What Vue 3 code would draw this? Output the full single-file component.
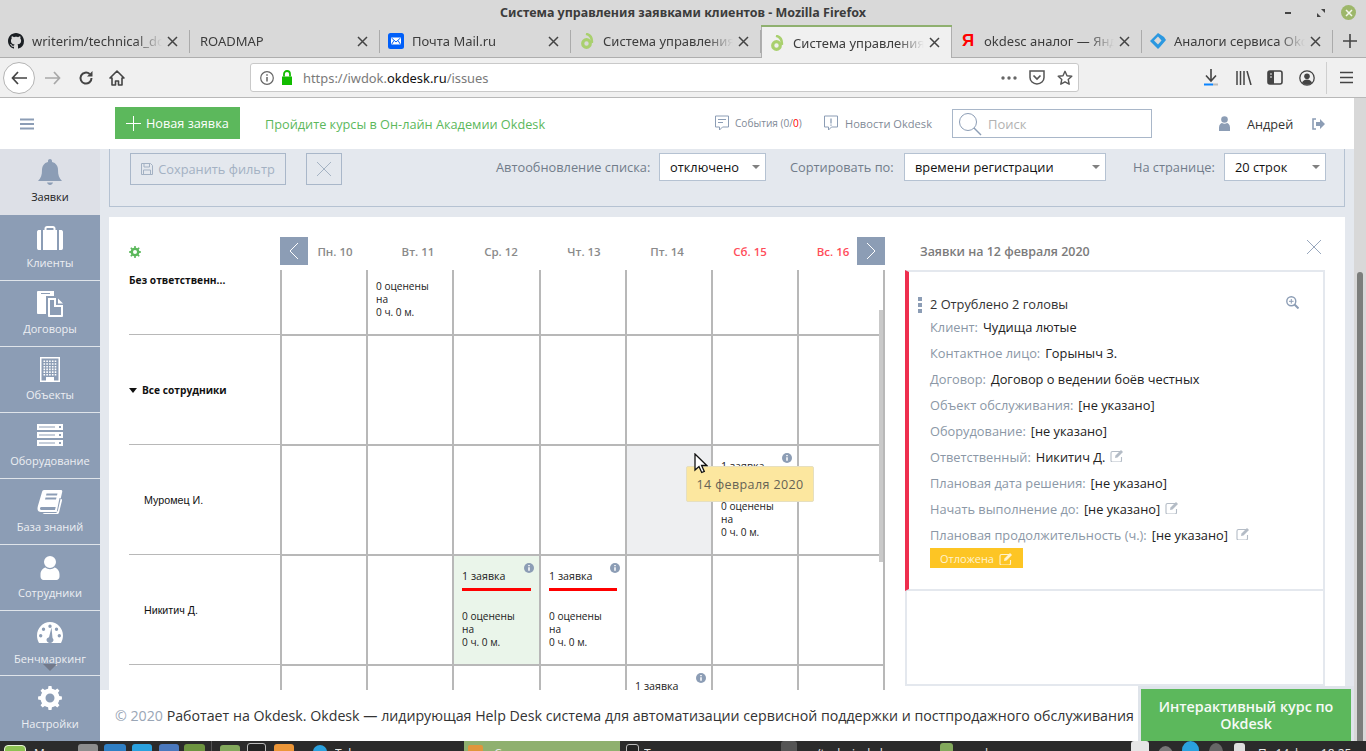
<script setup>
const gearPath = (cx, cy, ro, ri, hole, teeth) => {
  let d = ''
  const step = (Math.PI * 2) / teeth
  for (let i = 0; i < teeth; i++) {
    const a = i * step
    const pts = [
      [ri, a - step * 0.5],
      [ri, a - step * 0.26],
      [ro, a - step * 0.16],
      [ro, a + step * 0.16],
      [ri, a + step * 0.26]
    ]
    pts.forEach(([r, t], j) => {
      const x = (cx + r * Math.cos(t)).toFixed(2)
      const y = (cy + r * Math.sin(t)).toFixed(2)
      d += `${i === 0 && j === 0 ? 'M' : 'L'}${x} ${y}`
    })
  }
  d += 'Z'
  d += `M${cx - hole} ${cy}a${hole} ${hole} 0 1 0 ${hole * 2} 0a${hole} ${hole} 0 1 0 ${-hole * 2} 0Z`
  return d
}

const buildingPath = () => {
  let d = 'M3 0h20v25H3zM4.500 1.500v22h4.500v-3.500h8v3.500h4.500v-22z'
  for (let r = 0; r < 6; r++) {
    for (let c = 0; c < 5; c++) {
      d += `M${6.5 + c * 2.8} ${3.5 + r * 2.7}h1.600v1.600h-1.600z`
    }
  }
  return d
}

const serverPath = () => {
  let d = ''
  ;[1, 9, 17].forEach((y) => {
    d += `M0 ${y}h26v6H0zM22 ${y + 2}h2v2h-2zM2 ${y + 2.5}v1h16v-1z`
  })
  return d
}

const navItems = [
  { label: 'Заявки', active: true, d: 'M13 0c1.100 0 2 .8 2 2v1c4 1 6 4 6 8 0 5 1 8 4 11H1c3-3 4-6 4-11 0-4 2-7 6-8V2c0-1.200.9-2 2-2zM10 23.500h6c-.5 1.500-1.500 2.500-3 2.500s-2.500-1-3-2.500z' },
  { label: 'Клиенты', d: 'M1.500 5H4v20H1.500C.7 25 0 24 0 23V7c0-1 .7-2 1.500-2zM6 5h1.500V3.500C7.500 2.100 8.600 1 10 1h6c1.400 0 2.500 1.100 2.500 2.500V5H20v20H6zM9.500 5h7V3.500c0-.3-.2-.5-.5-.5h-6c-.3 0-.5.2-.5.500zM22 5h2.500c.8 0 1.500 1 1.500 2v16c0 1-.7 2-1.500 2H22z' },
  { label: 'Договоры', d: 'M1 0h16v5h-8v18H1c-.5 0-1-.5-1-1V1c0-.5.500-1 1-1zM4 2v1h9V2zM11 7h8v7h7v11c0 .5-.5 1-1 1H12c-.5 0-1-.5-1-1zM13 9v15h11v-8h-7V9zM21 7.500l5 5h-5z' },
  { label: 'Объекты', d: buildingPath() },
  { label: 'Оборудование', d: serverPath() },
  { label: 'База знаний', d: 'M7 1h17c1 0 1.500 1 1.200 2L21 21c-.3 1.500-1 2-2.500 2H4c-2 0-3.500-1-3.500-3 0-1 .1-2 .4-3L5 3c.3-1.300 1-2 2-2zM9.500 4.500l-.5 2h11l.5-2zM8.500 8.500l-.5 2h11l.5-2zM4.500 18c-1 0-1.500.7-1.500 1.500S3.500 21 4.500 21H18c.2-1 .5-2 .7-3zM22.500 9l-3 15H5.600c.6.700 1.400 1 2.400 1h12c1 0 1.700-.5 2-1.500l3-12c.2-1-.5-2-2.500-2.500z' },
  { label: 'Сотрудники', d: 'M13 1a6 6 0 1 1 0 12 6 6 0 0 1 0-12zM8.500 12.500c1.200 1 2.800 1.700 4.500 1.700s3.300-.7 4.500-1.700c2.500.5 5 3 5 7v2c0 2-1.500 3.500-3 3.500H6.500c-1.500 0-3-1.500-3-3.500v-2c0-4 2.500-6.500 5-7z' },
  { label: 'Бенчмаркинг', d: 'M13 1C6 1 0 7 0 14.500c0 2.700.8 5.200 2 7.500h22c1.200-2.300 2-4.800 2-7.500C26 7 20 1 13 1zM13 3.500a1.700 1.700 0 1 1 0 3.400 1.700 1.700 0 0 1 0-3.400zM6.500 6.500a1.700 1.700 0 1 1 0 3.400 1.700 1.700 0 0 1 0-3.400zM19.500 6.500a1.700 1.700 0 1 1 0 3.400 1.700 1.700 0 0 1 0-3.400zM3.700 13a1.700 1.700 0 1 1 0 3.400 1.700 1.700 0 0 1 0-3.400zM22.300 13a1.700 1.700 0 1 1 0 3.400 1.700 1.700 0 0 1 0-3.400zM14.500 6.500l1 10.500c.6.500 1 1.200 1 2 0 1.500-1.500 3-3.500 3s-3.500-1.500-3.500-3c0-1.300 1-2.500 2.500-2.800z' },
  { label: 'Настройки', d: gearPath(13, 12, 12, 9.500, 4.500, 8) }
]

const tabs = [
  { title: 'writerim/technical_docs', icon: 'github', width: 190 },
  { title: 'ROADMAP', icon: '', width: 190 },
  { title: 'Почта Mail.ru', icon: 'mail', width: 191 },
  { title: 'Система управления заявками', icon: 'okdesk', width: 190 },
  { title: 'Система управления заявками', icon: 'okdesk', width: 191, active: true },
  { title: 'okdesc аналог — Яндекс', icon: 'yandex', width: 190 },
  { title: 'Аналоги сервиса Okdesk', icon: 'analog', width: 191 }
]

const days = [
  { label: 'Пн. 10' }, { label: 'Вт. 11' }, { label: 'Ср. 12' }, { label: 'Чт. 13' },
  { label: 'Пт. 14' }, { label: 'Сб. 15', off: true }, { label: 'Вс. 16', off: true }
]

const rows = [
  { name: 'Без ответственн...', kind: 'bold', cells: { 1: {} } },
  { name: 'Все сотрудники', kind: 'group', cells: {} },
  { name: 'Муромец И.', kind: 'person', cells: { 5: {} }, hover: 4 },
  { name: 'Никитич Д.', kind: 'person', cells: { 2: {}, 3: {} }, today: 2 },
  { name: '', kind: 'person', cells: { 4: {} } }
]

const fields = [
  { label: 'Клиент:', value: 'Чудища лютые' },
  { label: 'Контактное лицо:', value: 'Горыныч З.' },
  { label: 'Договор:', value: 'Договор о ведении боёв честных' },
  { label: 'Объект обслуживания:', value: '[не указано]' },
  { label: 'Оборудование:', value: '[не указано]' },
  { label: 'Ответственный:', value: 'Никитич Д.', edit: true },
  { label: 'Плановая дата решения:', value: '[не указано]' },
  { label: 'Начать выполнение до:', value: '[не указано]', edit: true },
  { label: 'Плановая продолжительность (ч.):', value: '[не указано]', edit: true, wide: true }
]

const editPath = 'M11 2.500H2.500C1.700 2.500 1 3.200 1 4v7.500C1 12.300 1.700 13 2.500 13H10c.8 0 1.500-.7 1.500-1.500V8'
const miniGear = gearPath(6, 6, 6, 4.400, 2, 8)

const taskIcons = [
  { w: 20, ml: 0, c: '#8d8d8d' }, { w: 22, ml: 6, c: '#2f7fc4' }, { w: 20, ml: 6, c: '#2aa1de' },
  { w: 20, ml: 7, c: '#4a78bd' }, { w: 21, ml: 5, c: '#6d9440' }
]
</script>

<template>
  <div class="page">
    <div class="titlebar">
      <span class="title-text">Система управления заявками клиентов - Mozilla Firefox</span>
      <div class="win-btns">
        <span class="win-min"></span>
        <svg class="win-max" width="8" height="8" viewBox="0 0 8 8"><path d="M4 0h4v4zM4 8H0V4z" fill="#444" /></svg>
        <span class="win-close">
          <svg width="8" height="8" viewBox="0 0 8 8"><path d="M1 1l6 6M7 1L1 7" stroke="#f4f7ec" stroke-width="1.500" /></svg>
        </span>
      </div>
    </div>

    <div class="tabstrip">
      <div v-for="t in tabs" :key="t.title + t.width + t.icon" class="tab" :class="{ active: t.active }" :style="{ width: t.width + 'px' }">
        <svg v-if="t.icon === 'github'" class="fav" viewBox="0 0 16 16"><path fill="#1b1f23" d="M8 0C3.580 0 0 3.580 0 8c0 3.540 2.290 6.530 5.470 7.590.4.070.55-.17.55-.38 0-.19-.01-.82-.01-1.490-2.010.37-2.530-.49-2.690-.94-.09-.23-.48-.94-.82-1.130-.28-.15-.68-.52-.01-.53.63-.01 1.080.58 1.230.82.72 1.210 1.870.87 2.330.66.070-.52.28-.87.51-1.070-1.780-.2-3.640-.89-3.640-3.950 0-.87.31-1.590.82-2.150-.08-.2-.36-1.020.08-2.120 0 0 .67-.21 2.200.82.64-.18 1.320-.27 2-.27s1.360.09 2 .27c1.530-1.040 2.200-.82 2.200-.82.44 1.100.16 1.920.08 2.120.51.56.82 1.270.82 2.150 0 3.070-1.870 3.750-3.650 3.950.29.25.54.73.54 1.480 0 1.070-.01 1.930-.01 2.200 0 .21.15.46.55.38A8.010 8.010 0 0 0 16 8c0-4.420-3.580-8-8-8z" /></svg>
        <svg v-else-if="t.icon === 'mail'" class="fav" viewBox="0 0 16 16"><rect width="16" height="16" rx="2.500" fill="#005ff9" /><path d="M3 4.500h10v7H3z" fill="#fff" /><path d="M3.500 5L8 9l4.500-4M3.500 11.500L6 7.500M12.500 11.500L10 7.500" stroke="#005ff9" stroke-width="1" fill="none" /></svg>
        <svg v-else-if="t.icon === 'okdesk'" class="fav" viewBox="0 0 16 16"><circle cx="7.500" cy="10.500" r="3.800" fill="none" stroke="#a9d06e" stroke-width="3.200" /><path d="M7 .8c4 1 6.300 4 5.800 9" fill="none" stroke="#a9d06e" stroke-width="2.600" /></svg>
        <span v-else-if="t.icon === 'yandex'" class="fav ya">Я</span>
        <svg v-else-if="t.icon === 'analog'" class="fav" viewBox="0 0 16 16"><path d="M8 0l6 4 2 3-6 7-2 2-2-2-6-6 3-3zM8 3.500L4 7.500l3 3 1 1 3.500-4z" fill="#2b98e0" fill-rule="evenodd" /></svg>
        <span class="tab-text" :class="{ plain: !t.icon }">{{ t.title }}</span>
        <svg class="tab-x" width="11" height="11" viewBox="0 0 11 11"><path d="M1 1l9 9M10 1l-9 9" stroke="#444" stroke-width="1.500" /></svg>
      </div>
      <div class="newtab">
        <svg width="14" height="14" viewBox="0 0 14 14"><path d="M7 0v14M0 7h14" stroke="#444" stroke-width="1.600" /></svg>
      </div>
    </div>

    <div class="toolbar">
      <div class="back-btn">
        <svg width="16" height="14" viewBox="0 0 16 14"><path d="M7 1L1.500 7 7 13M2 7h14" stroke="#444" stroke-width="1.700" fill="none" /></svg>
      </div>
      <svg class="fwd" width="16" height="14" viewBox="0 0 16 14"><path d="M9 1l5.500 6L9 13M14 7H0" stroke="#a8a8a8" stroke-width="1.700" fill="none" /></svg>
      <svg class="reload" width="16" height="16" viewBox="0 0 16 16"><path d="M13.500 8a5.500 5.500 0 1 1-1.800-4" stroke="#444" stroke-width="2" fill="none" /><path d="M14.500 1v5.500H9z" fill="#444" /></svg>
      <svg class="home" width="16" height="16" viewBox="0 0 16 16"><path d="M8 1L1 8h2v7h3.500v-4h3v4H13V8h2z" stroke="#444" stroke-width="1.600" fill="none" stroke-linejoin="round" /></svg>
      <div class="urlbar">
        <svg class="url-i" width="14" height="14" viewBox="0 0 14 14"><circle cx="7" cy="7" r="6.300" fill="none" stroke="#666" stroke-width="1.200" /><path d="M7 6v4.500M7 3.200v1.600" stroke="#666" stroke-width="1.500" /></svg>
        <svg class="url-lock" width="12" height="15" viewBox="0 0 12 15"><path d="M1 6.500h10V15H1z" fill="#12bc00" /><path d="M3 6.500V4a3 3 0 0 1 6 0v2.500" fill="none" stroke="#12bc00" stroke-width="1.800" /></svg>
        <span class="url-text">https://iwdok.<b>okdesk.ru</b>/issues</span>
        <svg class="url-dots" width="16" height="4" viewBox="0 0 16 4"><circle cx="2" cy="2" r="1.700" fill="#666" /><circle cx="8" cy="2" r="1.700" fill="#666" /><circle cx="14" cy="2" r="1.700" fill="#666" /></svg>
        <svg class="url-pocket" width="16" height="15" viewBox="0 0 16 15"><path d="M1 1h14v6.500C15 11 12 14 8 14S1 11 1 7.500z" fill="none" stroke="#555" stroke-width="1.500" /><path d="M4.500 5.500L8 9l3.500-3.500" fill="none" stroke="#555" stroke-width="1.700" /></svg>
        <svg class="url-star" width="16" height="16" viewBox="0 0 16 16"><path d="M8 1.300l2 4.400 4.800.5-3.600 3.200 1 4.800L8 11.800l-4.200 2.400 1-4.800L1.200 6.200 6 5.700z" fill="none" stroke="#555" stroke-width="1.400" stroke-linejoin="round" /></svg>
      </div>
      <div class="tool-right">
        <svg class="tool-dl" width="14" height="18" viewBox="0 0 14 18"><path d="M7 0v11M2 6.500L7 12l5-5.500" stroke="#444" stroke-width="1.600" fill="none" /><path d="M0 15.500h9" stroke="#0a84ff" stroke-width="2" /><path d="M9 15.500h5" stroke="#bbb" stroke-width="2" /></svg>
        <svg class="tool-lib" width="16" height="14" viewBox="0 0 16 14"><path d="M1 0v14M4.500 0v14M8 0v14M11 0l4 14" stroke="#444" stroke-width="1.500" /></svg>
        <svg class="tool-side" width="16" height="15" viewBox="0 0 16 15"><rect x="1" y="1" width="14" height="13" rx="2" fill="none" stroke="#444" stroke-width="1.600" /><path d="M1 1h6v13H1z" fill="#444" /><path d="M3 4h2M3 7h2" stroke="#eee" stroke-width="1" /></svg>
        <svg class="tool-acc" width="16" height="16" viewBox="0 0 16 16"><circle cx="8" cy="8" r="7.200" fill="none" stroke="#444" stroke-width="1.300" /><circle cx="8" cy="6.200" r="2.800" fill="#444" /><path d="M3 12.500c1-2 3-3 5-3s4 1 5 3c-1 1.500-3 2.300-5 2.300s-4-.8-5-2.300z" fill="#444" /></svg>
        <span class="tool-sep"></span>
        <svg class="tool-menu" width="13" height="13" viewBox="0 0 13 13"><path d="M0 1.500h13M0 6.500h13M0 11.500h13" stroke="#444" stroke-width="1.700" /></svg>
      </div>
    </div>

    <div class="app">
      <div class="app-col">
        <header class="head">
          <svg class="burger" width="14" height="12" viewBox="0 0 14 12"><path d="M0 1.500h14M0 6h14M0 10.500h14" stroke="#8c9db5" stroke-width="2.200" /></svg>
          <button class="new-btn">
            <svg width="15" height="15" viewBox="0 0 15 15"><path d="M7.500 0v15M0 7.500h15" stroke="#fff" stroke-width="1" /></svg>
            <span>Новая заявка</span>
          </button>
          <a class="academy">Пройдите курсы в Он-лайн Академии Okdesk</a>
          <div class="hd-item ev">
            <svg width="14" height="16" viewBox="0 0 14 16"><path d="M.5 1h13v11H7.500l-3 3v-3h-4zM3 4.500h8M3 7.500h5" fill="none" stroke="#8c9db5" /></svg>
            <span>События (0/<em>0</em>)</span>
          </div>
          <div class="hd-item news">
            <svg width="14" height="16" viewBox="0 0 14 16"><path d="M.5 1h13v11H7.500l-3 3v-3h-4z" fill="none" stroke="#8c9db5" /><path d="M7 3.500v5M7 9.500v1.200" stroke="#8c9db5" stroke-width="1.300" /></svg>
            <span>Новости Okdesk</span>
          </div>
          <div class="search">
            <svg width="24" height="24" viewBox="0 0 24 24"><circle cx="10" cy="10" r="8.500" fill="none" stroke="#8c9db5" /><path d="M16 16l7 7" stroke="#8c9db5" stroke-width="1.400" /></svg>
            <span>Поиск</span>
          </div>
          <svg class="user-ico" width="11" height="15" viewBox="0 0 11 15"><circle cx="5.500" cy="3.500" r="3.300" fill="#8c9db5" /><path d="M0 15v-3.500C0 8.500 2 7 3 7c.7.500 1.600.8 2.500.8S7.300 7.500 8 7c1 0 3 1.500 3 4.500V15z" fill="#8c9db5" /></svg>
          <span class="user-name">Андрей</span>
          <svg class="exit-ico" width="13" height="12" viewBox="0 0 13 12"><path d="M4 1H1v10h3" fill="none" stroke="#8c9db5" stroke-width="1.600" /><path d="M4 4h4V1l5 5-5 5V8H4z" fill="#8c9db5" /></svg>
        </header>

        <div class="body">
          <nav class="side">
            <div v-for="n in navItems" :key="n.label" class="nav-item" :class="{ on: n.active }">
              <svg class="nav-ico" width="26" height="26" viewBox="0 0 26 26"><path :d="n.d" fill-rule="evenodd" /></svg>
              <span class="nav-label">{{ n.label }}</span>
            </div>
            <span class="side-more"></span>
          </nav>

          <div class="main">
            <div class="content">
              <div class="filter">
                <button class="save-btn">
                  <svg width="12" height="12" viewBox="0 0 12 12"><path d="M.5.500h9l2 2v9H.5zM3 .5v3.500h5.500V.5M2.500 11.500V7h7v4.500" fill="none" stroke="#a3b1c3" /></svg>
                  <span>Сохранить фильтр</span>
                </button>
                <button class="clear-btn">
                  <svg width="16" height="16" viewBox="0 0 16 16"><path d="M1 1l14 14M15 1L1 15" stroke="#94a4b8" stroke-width=".8" /></svg>
                </button>
                <span class="f-label a">Автообновление списка:</span>
                <div class="sel s1">отключено<i></i></div>
                <span class="f-label b">Сортировать по:</span>
                <div class="sel s2">времени регистрации<i></i></div>
                <span class="f-label c">На странице:</span>
                <div class="sel s3">20 строк<i></i></div>
              </div>

              <section class="panel">
                <div class="cal">
                  <div class="cal-head">
                    <div class="gear-cell">
                      <svg width="12" height="12" viewBox="0 0 12 12"><path :d="miniGear" fill="#5cb85c" fill-rule="evenodd" /></svg>
                    </div>
                    <span v-for="d in days" :key="d.label" class="day" :class="{ off: d.off }">{{ d.label }}</span>
                    <button class="arrow prev"><svg width="10" height="18" viewBox="0 0 10 18"><path d="M9 1L1 9l8 8" fill="none" stroke="#fff" /></svg></button>
                    <button class="arrow next"><svg width="10" height="18" viewBox="0 0 10 18"><path d="M1 1l8 8-8 8" fill="none" stroke="#fff" /></svg></button>
                  </div>
                  <div class="grid-wrap">
                    <div class="grid">
                      <template v-for="(r, ri) in rows" :key="ri">
                        <div class="who" :class="r.kind">
                          <i v-if="r.kind === 'group'" class="caret"></i>
                          <span>{{ r.name }}</span>
                        </div>
                        <div v-for="c in 7" :key="c" class="cell" :class="{ hover: r.hover === c - 1, today: r.today === c - 1 }">
                          <template v-if="r.cells[c - 1]">
                            <svg class="info" width="10" height="10" viewBox="0 0 10 10"><circle cx="5" cy="5" r="5" fill="#8c9db5" /><path d="M5 4.200v3.600M5 2v1.300" stroke="#fff" stroke-width="1.500" /></svg>
                            <div class="cnt">1 заявка</div>
                            <div class="bar"></div>
                            <div class="rated">0 оценены<br />на<br />0 ч. 0 м.</div>
                          </template>
                        </div>
                      </template>
                    </div>
                    <span class="grid-thumb"></span>
                  </div>
                </div>

                <aside class="detail">
                  <div class="detail-title">Заявки на 12 февраля 2020</div>
                  <svg class="detail-x" width="16" height="16" viewBox="0 0 16 16"><path d="M1 1l14 14M15 1L1 15" stroke="#8c9db5" stroke-width=".9" /></svg>
                  <div class="card">
                    <span class="dots"><i></i><i></i><i></i></span>
                    <svg class="zoom-ico" width="13" height="13" viewBox="0 0 13 13"><circle cx="5.300" cy="5.300" r="4.500" fill="none" stroke="#8c9db5" stroke-width="1.400" /><path d="M8.500 8.500l4 4" stroke="#8c9db5" stroke-width="2" /><path d="M5.300 3v4.600M3 5.300h4.600" stroke="#8c9db5" /></svg>
                    <div class="card-title">2 Отрублено 2 головы</div>
                    <div v-for="f in fields" :key="f.label" class="field">
                      <span class="f-name">{{ f.label }}</span>
                      <span class="f-val">{{ f.value }}</span>
                      <svg v-if="f.edit" class="edit" :class="{ wide: f.wide }" width="14" height="13" viewBox="0 0 14 13"><path :d="editPath" fill="none" stroke="#b4bcc6" stroke-width="1.100" /><path d="M5 9l.5-2.500L11 1l2 2-5.500 5.500z" fill="#b4bcc6" /></svg>
                    </div>
                    <button class="status">
                      <span>Отложена</span>
                      <svg width="14" height="13" viewBox="0 0 14 13"><path :d="editPath" fill="none" stroke="#fff3cf" stroke-width="1.100" /><path d="M5 9l.5-2.500L11 1l2 2-5.500 5.500z" fill="#fff3cf" /></svg>
                    </button>
                  </div>
                  <div class="card2"></div>
                </aside>

                <div class="tip">14 февраля 2020</div>
                <svg class="pointer" width="14" height="22" viewBox="0 0 14 22"><path d="M1 1v16l4-3.500 2.700 6 2.600-1.100-2.700-5.900h5.200z" fill="#fff" stroke="#111" stroke-width="1.300" /></svg>
              </section>
            </div>
            <footer class="foot"><span class="copy">© 2020 </span>Работает на Okdesk. Okdesk — лидирующая Help Desk система для автоматизации сервисной поддержки и постпродажного обслуживания</footer>
          </div>
        </div>
      </div>
      <div class="vscroll"><span></span></div>
      <button class="course">Интерактивный курс по Okdesk</button>
    </div>

    <div class="taskbar">
      <span class="mint"></span>
      <span class="tb-text menu">Меню</span>
      <span v-for="(t, i) in taskIcons" :key="i" class="tb-ico" :style="{ width: t.w + 'px', marginLeft: t.ml + 'px', background: t.c }"></span>
      <span class="tb-sep"></span>
      <span class="tb-ico folder"></span>
      <span class="tb-ico term"></span>
      <span class="tb-ico orange"></span>
      <span class="tb-ico tg"></span>
      <span class="tb-text tg-t">Telegram</span>
      <div class="tb-active"><span class="tb-mini"></span><span class="tb-text">Система управления</span></div>
      <span class="tb-ico term2"></span>
      <span class="tb-text t2">Терминал</span>
      <span class="tb-ico vlc"></span>
      <span class="tb-text t3">/technical_docs</span>
      <span class="tb-ico folder2"></span>
      <span class="tb-text t4">roadmap</span>
      <span class="tb-ico shield"></span>
      <span class="tb-ico gray"></span>
      <span class="tb-ico blue"></span>
      <span class="tb-ico gray2"></span>
      <span class="tb-ico batt"></span>
      <span class="tb-text t5">Пт 14 фев, 18:25</span>
    </div>
  </div>
</template>

<style scoped>
.page {
  width: 1366px; height: 751px; overflow: hidden; display: flex; flex-direction: column;
  position: relative; background: #fff; font-family: "Open Sans", sans-serif; color: #222;
}
button { font-family: inherit; padding: 0; cursor: pointer; }

.titlebar {
  height: 25px; flex: none; background: #d9d9d9; display: grid; grid-template-columns: 1fr auto 1fr; align-items: center;
  font-family: "Noto Sans", sans-serif;
}
.title-text { grid-column: 2; font-size: 12.500px; font-weight: 700; color: #3c3c3c; }
.win-btns { grid-column: 3; display: flex; align-items: center; justify-content: flex-end; padding-right: 10px; }
.win-min { width: 6px; height: 2px; background: #444; margin-right: 26px; }
.win-max { margin-right: 16px; }
.win-close { width: 15px; height: 15px; border-radius: 50%; background: #9db76a; display: flex; align-items: center; justify-content: center; }

.tabstrip { height: 32px; flex: none; background: #d9d9d9; display: flex; border-bottom: 1px solid #aeaeae; box-sizing: content-box; font-family: "Noto Sans", sans-serif; }
.tab { height: 32px; box-sizing: border-box; display: flex; align-items: center; padding-left: 8px; position: relative; flex: none; }
.tab::after { content: ''; position: absolute; right: 0; top: 5px; height: 23px; width: 1px; background: #ababab; }
.tab.active { background: #f0f0f0; border-top: 2px solid #8fb06f; box-shadow: inset 1px 0 #aeaeae, inset -1px 0 #aeaeae; height: 33px; }
.tab.active::after { display: none; }
.fav { width: 16px; height: 16px; flex: none; margin-right: 8px; }
.ya { color: #f00; font: 700 17px/16px "Liberation Sans", sans-serif; text-align: center; }
.tab-text {
  flex: 1; min-width: 0; white-space: nowrap; overflow: hidden; font-size: 13px; color: #3c3c3c;
  -webkit-mask-image: linear-gradient(to right, #000 80%, transparent);
  mask-image: linear-gradient(to right, #000 80%, transparent);
}
.tab-text.plain { margin-left: 2px; }
.tab-x { flex: none; margin: 0 12px 0 5px; }
.newtab { flex: 1; display: flex; align-items: center; justify-content: center; }

.toolbar { height: 39px; flex: none; background: #f0f0f0; border-bottom: 1px solid #b8b8b8; display: flex; align-items: center; position: relative; }
.back-btn { width: 32px; height: 32px; margin-left: 3px; border-radius: 50%; background: #fff; border: 1px solid #b4b4b4; display: flex; align-items: center; justify-content: center; box-sizing: border-box; }
.fwd { margin-left: 10px; }
.reload { margin-left: 17px; }
.home { margin-left: 15px; }
.urlbar { width: 829px; height: 29px; box-sizing: border-box; margin-left: 125px; background: #fff; border: 1px solid #c9c9c9; border-radius: 3px; display: flex; align-items: center; font-family: "Noto Sans", sans-serif; }
.url-i { margin-left: 9px; }
.url-lock { margin-left: 7px; }
.url-text { margin-left: 10px; font-size: 12.900px; color: #7a7a7a; }
.url-text b { font-weight: 400; color: #111; }
.url-dots { margin-left: auto; margin-right: 12px; }
.url-pocket { margin-right: 12px; }
.url-star { margin-right: 5px; }
.tool-right { margin-left: auto; display: flex; align-items: center; }
.tool-dl { margin-right: 18px; }
.tool-lib { margin-right: 15px; }
.tool-side { margin-right: 16px; }
.tool-acc { margin-right: 11px; }
.tool-sep { width: 1px; height: 32px; background: #cfcfcf; margin-right: 13px; }
.tool-menu { margin-right: 13px; }

.app { flex: 1; min-height: 0; display: flex; position: relative; }
.app-col { width: 1354px; display: flex; flex-direction: column; }
.vscroll { flex: 1; background: #d8d8d8; position: relative; }
.vscroll span { position: absolute; left: 3px; top: 174px; bottom: 0; width: 6px; background: #7c7e7c; border-radius: 3px 3px 0 0; }

.head { height: 51px; flex: none; background: #fff; display: flex; align-items: center; box-sizing: border-box; }
.burger { margin-left: 20px; flex: none; }
.new-btn { margin-left: 81px; width: 125px; height: 32px; flex: none; background: #5cb85c; color: #fff; border: 0; display: flex; align-items: center; gap: 5px; padding-left: 11px; font-size: 12.700px; margin-top: -1px; }
.academy { width: 280px; margin-left: 25px; flex: none; font-size: 12.730px; color: #5cb85c; white-space: nowrap; }
.hd-item { display: flex; align-items: center; flex: none; color: #7f8a97; white-space: nowrap; margin-top: -1px; }
.hd-item em { font-style: normal; color: #f00; }
.ev { margin-left: 170px; width: 109px; gap: 6px; font-size: 10.100px; }
.news { width: 128px; gap: 7px; font-size: 11.100px; }
.search { width: 200px; height: 29px; flex: none; box-sizing: border-box; border: 1px solid #a9b7c9; display: flex; align-items: center; padding-left: 5px; gap: 6px; font-size: 13px; color: #b2b2b2; }
.user-ico { margin-left: 67px; flex: none; }
.user-name { margin-left: 17px; font-size: 12.700px; color: #333; width: 65px; flex: none; }
.exit-ico { flex: none; }

.body { flex: 1; min-height: 0; display: flex; }
.side { width: 100px; flex: none; background: #8c9db5; position: relative; display: flex; flex-direction: column; }
.nav-item { height: 66px; flex: none; box-sizing: border-box; display: flex; flex-direction: column; align-items: center; padding-top: 10px; border-bottom: 1px solid #dfe4ea; color: #eceff3; }
.nav-item:first-child { border-bottom: 0; background: #dde0e7; color: #222; }
.nav-item:first-child .nav-ico { fill: #8c9db5; }
.nav-item:nth-child(8), .nav-item:nth-child(9) { height: 65px; }
.nav-item:nth-child(9) { border-bottom: 0; }
.nav-ico { fill: #fff; flex: none; }
.nav-label { font-size: 11px; line-height: 16px; margin-top: 4px; white-space: nowrap; }
.side-more { position: absolute; left: 43px; top: 515px; width: 0; height: 0; border: 7px solid transparent; border-top-color: #6d7382; border-bottom: 0; opacity: .85; }

.main { flex: 1; min-width: 0; display: flex; flex-direction: column; background: #e4e8ee; }
.content { flex: 1; min-height: 0; padding: 0 9px; display: flex; flex-direction: column; }
.filter { height: 58px; flex: none; box-sizing: border-box; border: 1px solid #b5c2d2; border-top: 0; display: flex; align-items: flex-start; padding: 4px 0 0 20px; }
.save-btn { width: 156px; height: 32px; flex: none; box-sizing: border-box; border: 1px solid #a9b7c9; background: transparent; display: flex; align-items: center; justify-content: center; gap: 5px; color: #a3b1c3; font-size: 12.800px; }
.clear-btn { width: 36px; height: 32px; flex: none; box-sizing: border-box; margin-left: 20px; border: 1px solid #a9b7c9; background: transparent; display: flex; align-items: center; justify-content: center; }
.f-label { flex: none; line-height: 28px; font-size: 12.800px; color: #717c8a; white-space: nowrap; }
.f-label.a { margin-left: 154px; width: 163px; }
.f-label.b { margin-left: 24px; width: 114px; }
.f-label.c { margin-left: 27px; width: 91px; }
.sel { flex: none; height: 28px; box-sizing: border-box; background: #fff; border: 1px solid #b5c2d2; padding-left: 10px; line-height: 26px; font-size: 12.800px; color: #111; position: relative; white-space: nowrap; }
.sel i { position: absolute; right: 5px; top: 11px; border: 4px solid transparent; border-top: 4px solid #808080; border-bottom: 0; }
.s1 { width: 107px; }
.s2 { width: 202px; }
.s3 { width: 102px; }

.panel { margin-top: 10px; flex: 1; min-height: 0; background: #fff; display: flex; position: relative; }
.cal { width: 776px; flex: none; margin-left: 20px; padding-top: 20px; display: flex; flex-direction: column; box-sizing: content-box; }
.cal-head { height: 28px; flex: none; display: flex; align-items: center; position: relative; margin-bottom: 5px; }
.gear-cell { width: 164.500px; flex: none; display: flex; align-items: center; padding-top: 2px; }
.day { width: 83px; flex: none; text-align: center; font-size: 11.500px; font-weight: 600; color: #8a8a8a; padding-top: 1px; }
.day.off { color: #ff4d5a; }
.arrow { position: absolute; top: 0; width: 28px; height: 28px; border: 0; background: #8c9db5; display: flex; align-items: center; justify-content: center; }
.prev { left: 151px; }
.next { left: 728px; }

.grid-wrap { flex: 1; min-height: 0; overflow: hidden; position: relative; }
.grid { margin-top: -44px; display: grid; grid-template-columns: 151px 86px 86px 87px 86px 86px 86px 88px; grid-auto-rows: 110px; }
.who { border-bottom: 1px solid #b8b8b8; display: flex; align-items: center; font-size: 10.200px; margin-bottom: 1px; color: #111; }
.who.bold, .who.group { font-weight: 700; }
.who.person { padding-left: 15px; font-family: "Liberation Sans", sans-serif; font-size: 10.700px; }
.caret { border: 4px solid transparent; border-top: 5px solid #111; border-bottom: 0; margin-right: 5px; }
.cell { border-left: 2px solid #b8b8b8; border-bottom: 2px solid #b8b8b8; padding: 14px 8px 0; position: relative; font-size: 10.100px; line-height: 13px; color: #222; box-sizing: border-box; min-width: 0; }
.cell:nth-child(8n) { border-right: 2px solid #b8b8b8; }
.cell.hover { background: #eeeff1; }
.cell.today { background: #eaf5ea; }
.cnt { font-size: 10.700px; }
.info { position: absolute; right: 5px; top: 7px; }
.bar { height: 3px; margin-top: 5px; background: #f00; }
.rated { margin-top: 19px; }
.grid-thumb { position: absolute; left: 750px; top: 40px; width: 4px; height: 252px; background: #c9c9c9; }

.detail { width: 420px; flex: none; position: relative; padding-top: 26px; box-sizing: content-box; }
.detail-title { padding-left: 15px; font-size: 12.450px; line-height: 18px; font-weight: 600; color: #7b7b7b; height: 27px; }
.detail-x { position: absolute; left: 401px; top: 22px; }
.card { height: 321px; box-sizing: border-box; border: 2px solid #e4e8ee; border-left: 4px solid #ee2e4e; padding: 23px 0 0 21px; position: relative; }
.card2 { height: 95px; box-sizing: border-box; border: 2px solid #e4e8ee; border-top: 0; }
.dots { position: absolute; left: 9px; top: 25px; display: flex; flex-direction: column; gap: 2px; }
.dots i { width: 4px; height: 4px; background: #8c9db5; }
.zoom-ico { position: absolute; left: 377px; top: 24px; }
.card-title { font-size: 12.800px; line-height: 19px; color: #333; }
.field { height: 26px; line-height: 26px; font-size: 12.800px; white-space: nowrap; display: flex; align-items: center; }
.f-name { color: #8b97a6; margin-right: 5px; }
.f-val { color: #222; }
.edit { margin-left: 5px; margin-top: -3px; }
.edit.wide { margin-left: 8px; }
.status { margin-top: 0; width: 93px; height: 20px; background: #fdc524; border: 0; display: flex; align-items: center; justify-content: center; gap: 5px; color: #fff3cf; font-size: 11px; }

.tip { position: absolute; left: 577px; top: 249px; width: 128px; height: 36px; box-sizing: border-box; background: #fce79f; border: 1px solid #e6dfbf; border-radius: 2px; display: flex; align-items: center; justify-content: center; font-size: 12.500px; letter-spacing: .4px; color: #666355; }
.pointer { position: absolute; left: 585px; top: 236px; }

.foot { height: 51px; flex: none; background: #fff; padding-left: 15px; line-height: 51px; font-size: 14.200px; color: #333; white-space: nowrap; overflow: hidden; }
.copy { color: #9aa6b6; }
.course { position: absolute; left: 1138px; top: 588px; width: 216px; height: 55px; box-sizing: border-box; border: 3px solid #dfe4ea; border-bottom: 0; background: #5cb85c; color: #f6faf6; font-size: 14.300px; font-weight: 600; line-height: 17px; padding: 0 10px; }

.taskbar { height: 10px; flex: none; background: #2b2b2b; display: flex; overflow: hidden; }
.mint { width: 22px; height: 17px; margin: 4px 0 0 4px; border-radius: 4px; background: #8dc153; border: 1px solid #e8f2d8; box-sizing: border-box; flex: none; }
.tb-text { font-size: 12px; line-height: 16px; color: #e8e8e8; white-space: nowrap; flex: none; padding-top: 5px; overflow: hidden; }
.menu { margin-left: 8px; width: 44px; }
.tb-ico { display: block; height: 18px; border-radius: 3px 3px 0 0; flex: none; margin-top: 3px; }
.tb-sep { width: 1px; height: 10px; background: #555; margin-left: 6px; flex: none; }
.folder { width: 20px; margin-left: 8px; background: #83a95c; margin-top: 4px; }
.term { width: 19px; margin-left: 7px; background: #222; border: 1px solid #bbb; box-sizing: border-box; margin-top: 2px; }
.orange { width: 20px; margin-left: 8px; background: #ec9638; }
.tg { width: 14px; height: 14px; margin-left: 19px; background: #2aa1de; border-radius: 50%; margin-top: 4px; }
.tg-t { margin-left: 8px; width: 129px; }
.tb-active { width: 156px; height: 10px; flex: none; background: #8fb06f; display: flex; }
.tb-mini { width: 15px; height: 14px; margin: 4px 11px 0 4px; background: #e0953a; border-radius: 2px; flex: none; }
.term2 { width: 13px; margin-left: 6px; background: #222; border: 1px solid #bbb; box-sizing: border-box; }
.t2 { margin-left: 5px; width: 137px; }
.vlc { width: 16px; background: #555; margin-top: 0; }
.t3 { margin-left: 19px; width: 124px; }
.folder2 { width: 13px; margin-top: 2px; background: #83a95c; }
.t4 { margin-left: 9px; width: 169px; }
.shield { width: 18px; background: #e6e6e6; margin-top: 0; }
.gray { width: 15px; margin-left: 9px; margin-top: 5px; background: #777; border-radius: 50%; }
.blue { width: 17px; margin-left: 9px; margin-top: 0; background: #2aa1de; border-radius: 50%; }
.gray2 { width: 14px; margin-left: 10px; margin-top: 2px; background: #666; border-radius: 50%; }
.batt { width: 11px; margin-left: 11px; margin-top: 2px; background: #ddd; }
.t5 { margin-left: 13px; }
</style>
